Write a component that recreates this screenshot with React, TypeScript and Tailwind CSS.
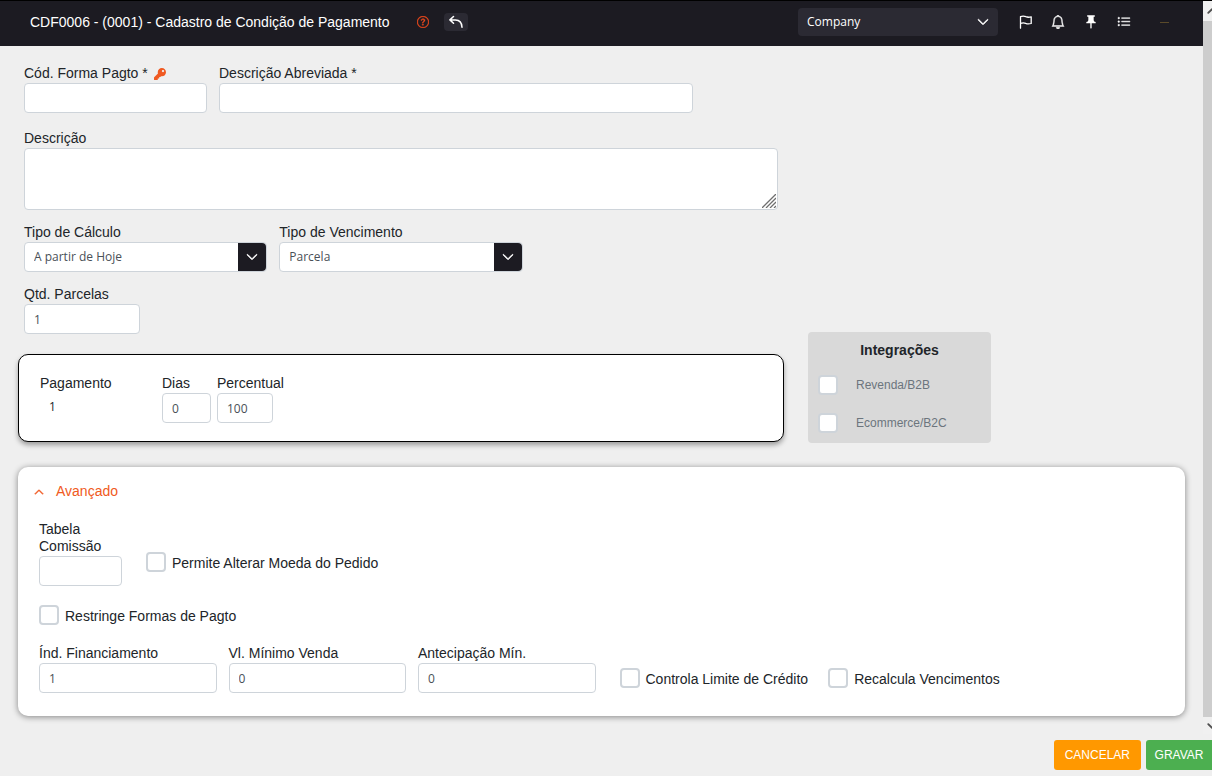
import type { ReactNode } from "react";
import { BsBell, BsChevronDown, BsChevronUp, BsListUl, BsQuestionCircle } from "react-icons/bs";
import { MdPushPin } from "react-icons/md";
import { FaKey } from "react-icons/fa";

const control =
  "h-[30px] w-full rounded border border-[#ced4da] bg-white px-[9px] font-['Open_Sans','Noto_Sans',sans-serif] text-xs text-[#495057] outline-none focus:border-[#f05a22]";

type FieldProps = {
  id: string;
  label: string;
  value?: string;
  icon?: ReactNode;
  className?: string;
};

function Label({ id, children }: { id: string; children: ReactNode }) {
  return (
    <label htmlFor={id} className="flex items-center gap-1.5 pb-px leading-[17px]">
      {children}
    </label>
  );
}

function Field({ id, label, value, icon, className }: FieldProps) {
  return (
    <div className={className}>
      <Label id={id}>
        {label}
        {icon}
      </Label>
      <input id={id} type="text" defaultValue={value} className={control} />
    </div>
  );
}

function SelectField({ id, label, options }: { id: string; label: string; options: string[] }) {
  return (
    <div>
      <Label id={id}>{label}</Label>
      <div className="relative">
        <select id={id} className={`${control} appearance-none pr-9`}>
          {options.map((o) => (
            <option key={o}>{o}</option>
          ))}
        </select>
        <span className="pointer-events-none absolute inset-y-px right-px flex w-7 items-center justify-center rounded-r bg-[#1c1b22] text-white">
          <BsChevronDown className="size-3" strokeWidth={1.2} />
        </span>
      </div>
    </div>
  );
}

const box =
  "size-5 shrink-0 appearance-none rounded border-2 border-[#ced4da] bg-white checked:border-[#f05a22] checked:bg-[#f05a22]";

function Check({ id, label }: { id: string; label: string }) {
  return (
    <div className="flex items-center gap-1.5">
      <input id={id} type="checkbox" className={box} />
      <label htmlFor={id} className="pt-[2px] leading-[17px]">
        {label}
      </label>
    </div>
  );
}

function FlagIcon() {
  return (
    <svg viewBox="0 0 14 14" className="size-3.5" fill="none" stroke="currentColor" strokeWidth="1.3" strokeLinejoin="round">
      <path d="M1.5 13.2V1.6C3.9.6 5.300.9 6.900 1.700c1.700.8 3 .8 5.300.1v6.700c-2.300.7-3.800.7-5.500-.1-1.600-.8-3-.8-5.200 0" strokeLinecap="round" />
    </svg>
  );
}

function BackIcon() {
  return (
    <svg viewBox="0 0 14 14" className="size-3.5" fill="none" stroke="currentColor" strokeWidth="1.5" strokeLinecap="round" strokeLinejoin="round">
      <path d="M4.500 1.500.9 4.900l3.600 3.400M1.200 4.900h5.300c4 0 6.300 2.600 6.500 7.300" />
    </svg>
  );
}

function Header() {
  return (
    <header className="flex h-[46px] items-center border-t border-black bg-[#1c1b22] pb-[3px] pl-[30px] pr-[34px] text-white">
      <h1>CDF0006 - (0001) - Cadastro de Condição de Pagamento</h1>
      <button type="button" aria-label="Ajuda" className="ml-[27px] text-[#f04a1d]">
        <BsQuestionCircle className="size-3" strokeWidth={0.5} />
      </button>
      <button
        type="button"
        aria-label="Voltar"
        className="ml-[15px] flex h-[18px] w-6 items-center justify-center rounded bg-[#2b2a33]"
      >
        <BackIcon />
      </button>
      <div className="relative ml-auto w-[200px]">
        <select
          aria-label="Empresa"
          className="h-7 w-full appearance-none rounded bg-[#2b2a33] px-[9px] font-['Open_Sans','Noto_Sans',sans-serif] text-xs outline-none"
        >
          <option>Company</option>
        </select>
        <BsChevronDown className="pointer-events-none absolute right-[9px] top-2 size-3" strokeWidth={1.2} />
      </div>
      <nav className="ml-[21px] flex items-center gap-[18px]">
        <button type="button" aria-label="Marcar">
          <FlagIcon />
        </button>
        <button type="button" aria-label="Notificações">
          <BsBell className="size-3.5" strokeWidth={0.5} />
        </button>
        <button type="button" aria-label="Fixar">
          <MdPushPin className="size-4" />
        </button>
        <button type="button" aria-label="Menu">
          <BsListUl className="size-3.5" strokeWidth={0.5} />
        </button>
      </nav>
      <span className="ml-[29px] h-px w-[9px] bg-[#5a4a2a]" />
    </header>
  );
}

function Pagamento() {
  return (
    <section className="mt-5 flex h-[88px] rounded-[10px] border border-black bg-white pl-[21px] pt-5 shadow-[0_3px_5px_rgba(0,0,0,0.35)]">
      <div className="w-[122px]">
        <div className="pb-px leading-[17px]">Pagamento</div>
        <div className="px-[9px] font-['Open_Sans','Noto_Sans',sans-serif] text-xs leading-[28px] text-[#212529]">1</div>
      </div>
      <Field id="dias" label="Dias" value="0" className="w-[49px]" />
      <Field id="percentual" label="Percentual" value="100" className="ml-1.5 w-14" />
    </section>
  );
}

function Integracoes() {
  return (
    <section aria-labelledby="integracoes" className="flex h-[111px] w-[183px] flex-col self-end rounded bg-[#d9d9d9] px-2.5">
      <h2 id="integracoes" className="pt-2.5 text-center font-bold leading-[17px]">
        Integrações
      </h2>
      {["Revenda/B2B", "Ecommerce/B2C"].map((name) => (
        <div key={name} className="flex h-[38px] items-center gap-[18px] pt-[14px] text-xs text-[#6c757d]">
          <input id={name} type="checkbox" className={box} />
          <label htmlFor={name}>{name}</label>
        </div>
      ))}
    </section>
  );
}

function Avancado() {
  return (
    <section className="mt-6 rounded-[10px] bg-white px-[21px] pb-[23px] pt-4 shadow-[0_1px_6px_rgba(0,0,0,0.45)]">
      <button type="button" className="-ml-[5px] flex items-center gap-3 leading-[17px] text-[#f05a22]">
        <BsChevronUp className="size-2.5" strokeWidth={1.5} />
        Avançado
      </button>
      <div className="mt-[21px] flex items-end gap-6">
        <Field id="tabela" label="Tabela Comissão" className="w-[83px]" />
        <div className="pb-[14px]">
          <Check id="moeda" label="Permite Alterar Moeda do Pedido" />
        </div>
      </div>
      <div className="mb-5 mt-[19px]">
        <Check id="restringe" label="Restringe Formas de Pagto" />
      </div>
      <div className="grid grid-cols-6 items-end gap-3">
        <Field id="indice" label="Índ. Financiamento" value="1" />
        <Field id="minimo" label="Vl. Mínimo Venda" value="0" />
        <Field id="antecipacao" label="Antecipação Mín." value="0" />
        <div className="col-span-3 flex gap-5 pb-[5px] pl-3">
          <Check id="limite" label="Controla Limite de Crédito" />
          <Check id="recalcula" label="Recalcula Vencimentos" />
        </div>
      </div>
    </section>
  );
}

function ScrollRail() {
  return (
    <div aria-hidden="true" className="flex w-[9px] shrink-0 flex-col overflow-hidden bg-[#f0f0f0] text-[#505050]">
      <div className="flex h-[21px] items-center border-t border-black pl-1">
        <BsChevronUp className="size-2.5 shrink-0" strokeWidth={2} />
      </div>
      <div className="flex-1 bg-[#cdcdcd]" />
      <div className="flex h-[17px] items-center pl-1">
        <BsChevronDown className="size-2.5 shrink-0" strokeWidth={2} />
      </div>
    </div>
  );
}

export default function App() {
  return (
    <div className="flex min-h-screen flex-col bg-[#efefef] font-['Liberation_Sans',Arial,sans-serif] text-sm text-[#212529]">
      <div className="flex flex-1">
        <div className="flex-1">
          <Header />
          <main className="px-[18px] pb-[18px] pt-[19px]">
            <div className="grid grid-cols-[766fr_377fr] gap-x-6">
              <form className="pb-px">
                <div className="px-1.5">
                  <div className="grid grid-cols-[183fr_474fr_73fr] gap-3">
                    <Field id="codigo" label="Cód. Forma Pagto *" icon={<FaKey className="size-3 text-[#f05a22]" />} />
                    <Field id="abreviada" label="Descrição Abreviada *" />
                  </div>
                  <div className="mt-[17px]">
                    <Label id="descricao">Descrição</Label>
                    <div className="relative flex">
                      <textarea id="descricao" className={`${control} h-[62px] resize-none`} />
                      <svg viewBox="0 0 14 14" className="pointer-events-none absolute bottom-0.5 right-0.5 size-3.5" stroke="#6f6f6f" strokeWidth="1.3">
                        <path d="M0 14 14 0M4 14 14 4M8 14l6-6M12 14l2-2" />
                      </svg>
                    </div>
                  </div>
                  <div className="mt-[14px] grid grid-cols-3 gap-3">
                    <SelectField id="calculo" label="Tipo de Cálculo" options={["A partir de Hoje", "Fora o Mês"]} />
                    <SelectField id="vencimento" label="Tipo de Vencimento" options={["Parcela", "Dia Fixo"]} />
                  </div>
                  <Field id="parcelas" label="Qtd. Parcelas" value="1" className="mt-[14px] w-[116px]" />
                </div>
                <Pagamento />
              </form>
              <Integracoes />
            </div>
            <Avancado />
          </main>
        </div>
        <ScrollRail />
      </div>
      <footer className="flex justify-end gap-[5px] py-1.5 text-xs text-white">
        <button type="button" className="h-[30px] rounded-[3px] bg-[#ff9800] px-[11px]">
          CANCELAR
        </button>
        <button type="button" className="h-[30px] w-[66px] rounded-l-[3px] bg-[#4caf50]">
          GRAVAR
        </button>
      </footer>
    </div>
  );
}
